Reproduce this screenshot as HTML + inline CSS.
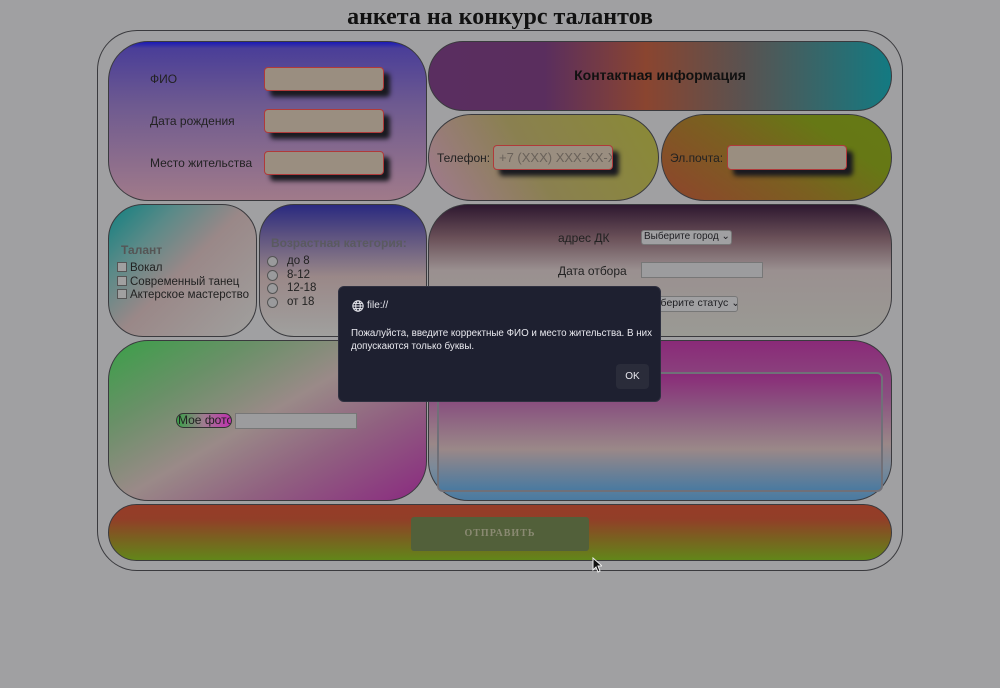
<!DOCTYPE html>
<html><head><meta charset="utf-8"><style>
*{box-sizing:border-box;margin:0;padding:0}
body{width:1000px;height:688px;background:#a0a0a2;font-family:"Liberation Sans",sans-serif;position:relative;overflow:hidden;color:#1e1e22}
.a{position:absolute;white-space:nowrap}
.box{position:absolute;border:1px solid #3a3a3e}
h1{position:absolute;left:0;width:1000px;top:4px;text-align:center;font:bold 24px "Liberation Serif",serif;color:#111}
.inp{position:absolute;background:#9a8e80;border:1px solid #b03a3a;border-radius:4px;box-shadow:6px 6px 5px #1a1a20}
.lbl{position:absolute;font-size:12px;color:#222;white-space:nowrap}
.cb{display:inline-block;width:10px;height:10px;border:1px solid #555;background:#a0a0a0;vertical-align:-1px;margin-right:3px}
.rd{position:absolute;width:11px;height:11px;border:1.5px solid #555;border-radius:50%;background:#9a9a9c}
</style></head><body>
<h1>анкета на конкурс талантов</h1>
<div class="box" style="left:97px;top:30px;width:806px;height:541px;border-radius:40px"></div>

<div class="box" style="left:108px;top:41px;width:319px;height:160px;border-radius:40px;background:linear-gradient(180deg,#1a1ab8 0%,#4a3e98 4%,#6e5a90 40%,#a07a8a 100%)"></div>
<div class="lbl" style="left:150px;top:72px">ФИО</div>
<div class="lbl" style="left:150px;top:114px">Дата рождения</div>
<div class="lbl" style="left:150px;top:156px">Место жительства</div>
<div class="inp" style="left:264px;top:67px;width:120px;height:24px"></div>
<div class="inp" style="left:264px;top:109px;width:120px;height:24px"></div>
<div class="inp" style="left:264px;top:151px;width:120px;height:24px"></div>

<div class="box" style="left:428px;top:41px;width:464px;height:70px;border-radius:35px;background:linear-gradient(90deg,#5a2e60 0%,#5a2e5e 25%,#8a4530 47%,#5a5250 68%,#137a82 100%)"></div>
<div class="a" style="left:428px;top:67px;width:464px;text-align:center;font-weight:bold;font-size:14px;color:#111">Контактная информация</div>

<div class="box" style="left:428px;top:114px;width:231px;height:87px;border-radius:44px;background:linear-gradient(60deg,#a07a90 0%,#8a8050 45%,#8a8a35 100%)"></div>
<div class="lbl" style="left:437px;top:151px">Телефон:</div>
<div class="inp" style="left:493px;top:145px;width:120px;height:25px;font-size:13px;color:#6a625a;padding:4px 5px;overflow:hidden;white-space:nowrap">+7 (XXX) XXX-XX-XX</div>
<div class="box" style="left:661px;top:114px;width:231px;height:87px;border-radius:44px;background:linear-gradient(35deg,#7a4a30 0%,#8a4a2a 10%,#7a6020 45%,#667815 75%,#657a15 100%)"></div>
<div class="lbl" style="left:670px;top:151px">Эл.почта:</div>
<div class="inp" style="left:727px;top:145px;width:120px;height:25px"></div>

<div class="box" style="left:108px;top:204px;width:149px;height:133px;border-radius:35px;background:linear-gradient(135deg,#108080 0%,#5a8a88 25%,#9a8888 50%,#a0a09e 100%)"></div>
<div class="a" style="left:121px;top:243px;font-weight:bold;font-size:12px;color:#555">Талант</div>
<div class="a" style="left:117px;top:262px;font-size:11.5px;line-height:13.5px;color:#222"><span class="cb"></span>Вокал<br><span class="cb"></span>Современный танец<br><span class="cb"></span>Актерское мастерство</div>

<div class="box" style="left:259px;top:204px;width:168px;height:133px;border-radius:35px;background:linear-gradient(180deg,#2a2a80 0%,#5a5080 22%,#9a8888 55%,#a0a09e 100%)"></div>
<div class="a" style="left:271px;top:236px;font-weight:bold;font-size:12px;color:#5a5a60">Возрастная категория:</div>
<div class="rd" style="left:267px;top:256px"></div><div class="rd" style="left:267px;top:270px"></div><div class="rd" style="left:267px;top:283px"></div><div class="rd" style="left:267px;top:297px"></div>
<div class="a" style="left:287px;top:255px;font-size:11.5px;line-height:13.5px;color:#222">до 8<br>8-12<br>12-18<br>от 18</div>

<div class="box" style="left:428px;top:204px;width:464px;height:133px;border-radius:40px;background:linear-gradient(180deg,#2e1830 0%,#6a5058 25%,#9a9090 50%,#9a9a94 100%)"></div>
<div class="lbl" style="left:558px;top:231px">адрес ДК</div>
<div class="a" style="left:641px;top:230px;width:91px;height:15px;border:1px solid #777;border-radius:3px;background:#a0a0a2;font-size:10px;line-height:12px;padding:0 2px;overflow:hidden">Выберите город ⌄</div>
<div class="lbl" style="left:558px;top:264px">Дата отбора</div>
<div class="a" style="left:641px;top:262px;width:122px;height:16px;border:1px solid #777;background:#9c9c9e"></div>
<div class="a" style="left:641px;top:296px;width:97px;height:16px;border:1px solid #777;border-radius:3px;background:#a0a0a2;font-size:10.5px;line-height:13px;padding:0 4px;overflow:hidden">Выберите статус ⌄</div>

<div class="box" style="left:108px;top:340px;width:319px;height:161px;border-radius:40px;background:linear-gradient(150deg,#3aa048 0%,#6a9068 25%,#9a8a88 48%,#906080 70%,#8a2a80 100%)"></div>
<div class="a" style="left:176px;top:413px;width:56px;height:15px;border:1px solid #333;border-radius:8px;background:linear-gradient(90deg,#3aa048,#a07a90,#c030b0);font-size:12px;line-height:13px;padding-left:1px;color:#222;overflow:hidden">Мое фото</div>
<div class="a" style="left:235px;top:413px;width:122px;height:16px;border:1px solid #777;background:#9c9c9e"></div>

<div class="box" style="left:428px;top:340px;width:464px;height:161px;border-radius:40px;background:linear-gradient(180deg,#8a2a78 0%,#8a5080 35%,#9a8888 65%,#7a8a9a 80%,#4a7aa0 100%)"></div>
<div class="a" style="left:437px;top:372px;width:446px;height:120px;border:2px solid #707078;border-radius:6px;background:linear-gradient(180deg,#8a2a78 0%,#8a5880 30%,#9a8888 65%,#4a7aa0 100%)"></div>

<div class="box" style="left:108px;top:504px;width:784px;height:57px;border-radius:29px;background:linear-gradient(180deg,#963c28 0%,#923e28 25%,#7a6020 60%,#62861a 100%)"></div>
<div class="a" style="left:411px;top:517px;width:178px;height:34px;background:#52603a;border-radius:3px;text-align:center;font:bold 10px/34px 'Liberation Serif',serif;letter-spacing:1px;color:#8a8a72">ОТПРАВИТЬ</div>

<div class="a" style="left:338px;top:286px;width:323px;height:116px;background:#1e2030;border:1px solid #2e3040;border-radius:6px;color:#e8e8ee;white-space:normal">
<svg class="a" style="left:13px;top:13px" width="12" height="12" viewBox="0 0 12 12" fill="none" stroke="#e8e8ee" stroke-width="1"><circle cx="6" cy="6" r="5.2"/><ellipse cx="6" cy="6" rx="2.3" ry="5.2"/><path d="M0.8 6h10.4M1.6 3.4h8.8M1.6 8.6h8.8"/></svg>
<div class="a" style="left:28px;top:13px;font-size:10px">file://</div>
<div class="a" style="left:12px;top:40px;width:305px;font-size:9.8px;line-height:13px;white-space:normal">Пожалуйста, введите корректные ФИО и место жительства. В них допускаются только буквы.</div>
<div class="a" style="left:277px;top:77px;width:33px;height:25px;background:#2a2c3a;border-radius:4px;text-align:center;font-size:10px;line-height:25px">OK</div>
</div>
<svg class="a" style="left:592px;top:557px" width="10" height="16" viewBox="0 0 10 16"><path d="M1 1v12l3-3 2 5 2-1-2-5h4z" fill="#111" stroke="#eee" stroke-width="1"/></svg>
</body></html>
